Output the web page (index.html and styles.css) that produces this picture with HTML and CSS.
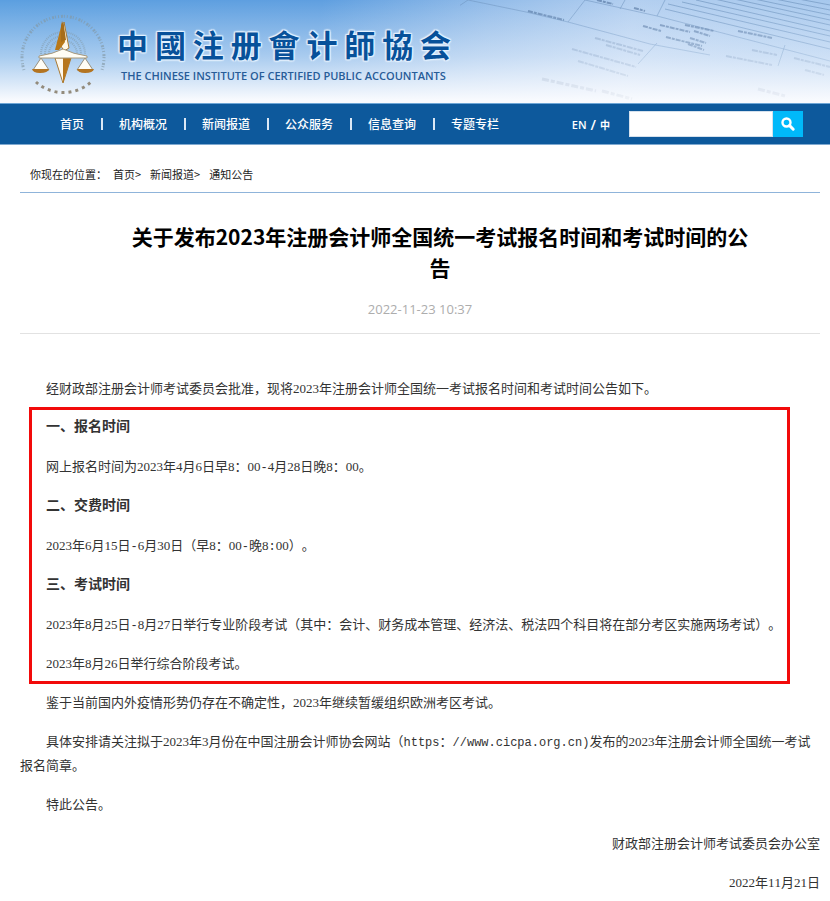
FILE: index.html
```html
<!DOCTYPE html>
<html lang="zh-CN">
<head>
<meta charset="utf-8">
<meta name="viewport" content="width=device-width, initial-scale=1">
<title>中国注册会计师协会</title>
<link rel="stylesheet" href="styles.css">
</head>
<body>
<header class="banner">
  <svg class="banner-art" viewBox="0 0 370 103" aria-hidden="true">
    <defs>
      <linearGradient id="fade" x1="0" y1="0" x2="0" y2="1">
        <stop offset="0" stop-color="#fff"/>
        <stop offset="1" stop-color="#fff" stop-opacity="0.1"/>
      </linearGradient>
      <mask id="fadeMask"><rect width="370" height="103" fill="url(#fade)"/></mask>
      <filter id="soft"><feGaussianBlur stdDeviation="0.7"/></filter>
    </defs>
    <g mask="url(#fadeMask)" fill="none" stroke="#6f93bd" filter="url(#soft)">
      <path stroke-width="1" opacity=".55" d="M8 0L66 12L108 22L190 44L250 55M125 0L108 22M165 0L160 9M205 0L197 16M125 0L197 16L370 61M197 43L178 64M325 45L318 66M8 0L-10 12"/>
      <path stroke-width="1" opacity=".65" d="M208 4L370 42M222 2L370 36M236 0L370 31M250 -2L370 25M265 -3L370 20M280 -4L370 15M295 -5L370 10M312 -6L370 5M205 9L370 49"/>
      <path stroke="#4b6c98" stroke-width="2" stroke-dasharray="5 1 3 1" opacity=".6" d="M68 11L104 20M137 0L153 4M174 8L185 11M183 26L201 31M200 25L230 32M225 25L254 31M206 37L242 46M234 31L250 36M230 38L246 43M228 44L244 50M278 31L312 38"/>
      <path stroke="#647fa6" stroke-width="2" stroke-dasharray="6 1 3 1" opacity=".4" d="M135 38L183 51M146 45L180 55M112 49L176 67M118 61L168 76M292 50L317 55M266 56L312 65M334 58L370 67M345 70L364 75"/>
      <path stroke="#5c6f8d" stroke-width="3" stroke-dasharray="7 2 4 2" opacity=".4" d="M82 79L136 91M142 91L172 99M298 89L325 96"/>
    </g>
  </svg>
  <a class="brand" href="#">
    <svg class="emblem" viewBox="0 0 90 90" aria-hidden="true">
      <g fill="none" stroke="#8298a4">
        <path stroke-width="3" stroke-dasharray="1 2 2 1 1 2" opacity=".65" d="M6 62A41 41 0 1 1 84 62"/>
        <path stroke-width="2" stroke-dasharray="1 1" opacity=".55" d="M23 46A22 22 0 0 1 67 46M27 46A18 18 0 0 1 63 46M31 46A14 14 0 0 1 59 46"/>
        <path stroke="#938b7c" stroke-width="3" stroke-dasharray="3 4" d="M18 74A41 41 0 0 0 73 74"/>
      </g>
      <path fill="#fff8e8" stroke="#a97932" stroke-width="1" d="M46 14L51 40L46 43L43 38Z"/>
      <path fill="#b97818" d="M44 15L47 34L41 42H37Z"/>
      <path fill="#a66d19" d="M43 18L44 13L46 18L48 32L43 34Z"/>
      <path fill="#fff9ed" stroke="#a97932" stroke-width="1" d="M37 50L45 75L53 50Z"/>
      <path fill="#b7761c" d="M45 50H53L45 75Z"/>
      <path fill="#fffdf5" stroke="#a6987d" stroke-width="1" d="M21 48Q35 46 45 41Q55 46 69 48V50H21Z"/>
      <path fill="#fffdf5" stroke="#98907d" stroke-width="1" d="M23 50L15 62H31ZM67 50L59 62H75Z"/>
      <path fill="#b37421" d="M14 61H31Q30 65 22 65Q15 65 14 61ZM59 61H76Q75 65 67 65Q60 65 59 61Z"/>
    </svg>
    <span class="brand-text">
      <span class="brand-cn"><span>中</span><span>國</span><span>注</span><span>册</span><span>會</span><span>计</span><span>師</span><span>協</span><span>会</span></span>
      <span class="brand-en">THE CHINESE INSTITUTE OF CERTIFIED PUBLIC ACCOUNTANTS</span>
    </span>
  </a>
</header>

<nav class="nav">
  <ul class="menu">
    <li><a href="#">首页</a></li>
    <li><a href="#">机构概况</a></li>
    <li><a href="#">新闻报道</a></li>
    <li><a href="#">公众服务</a></li>
    <li><a href="#">信息查询</a></li>
    <li><a href="#">专题专栏</a></li>
  </ul>
  <div class="lang"><a href="#">EN</a><span class="slash">/</span><a class="zh" href="#">中</a></div>
  <form class="search">
    <input type="text" aria-label="搜索">
    <button type="button" aria-label="搜索">
      <svg viewBox="0 0 16 16" width="16" height="16" aria-hidden="true"><circle cx="6.5" cy="6.5" r="4" fill="none" stroke="#fff" stroke-width="2.4"/><path d="M9.6 9.6L13.2 13.2" stroke="#fff" stroke-width="3" stroke-linecap="round"/></svg>
    </button>
  </form>
</nav>

<main class="page">
  <div class="crumbs"><span class="label">你现在的位置：</span><a href="#">首页&gt;</a><a href="#">新闻报道&gt;</a><a href="#">通知公告</a></div>
  <article>
    <div class="head">
      <h1>关于发布2023年注册会计师全国统一考试报名时间和考试时间的公告</h1>
      <time datetime="2022-11-23T10:37">2022-11-23 10:37</time>
    </div>
    <div class="content">
      <p>经财政部注册会计师考试委员会批准，现将2023年注册会计师全国统一考试报名时间和考试时间公告如下。</p>
      <section class="boxed">
        <h2>一、报名时间</h2>
        <p>网上报名时间为2023年4月6日早8：00<span class="mono">-</span>4月28日晚8：00。</p>
        <h2>二、交费时间</h2>
        <p>2023年6月15日<span class="mono">-</span>6月30日（早8：00<span class="mono">-</span>晚8<span class="mono">:</span>00）。</p>
        <h2>三、考试时间</h2>
        <p>2023年8月25日<span class="mono">-</span>8月27日举行专业阶段考试（其中：会计、财务成本管理、经济法、税法四个科目将在部分考区实施两场考试）。</p>
        <p>2023年8月26日举行综合阶段考试。</p>
      </section>
      <p>鉴于当前国内外疫情形势仍存在不确定性，2023年继续暂缓组织欧洲考区考试。</p>
      <p>具体安排请关注拟于2023年3月份在中国注册会计师协会网站（<span class="mono">https</span>：<span class="mono">//www.cicpa.org.cn)</span>发布的2023年注册会计师全国统一考试报名简章。</p>
      <p>特此公告。</p>
      <p class="sign">财政部注册会计师考试委员会办公室</p>
      <p class="sign">2022年11月21日</p>
    </div>
  </article>
</main>
</body>
</html>
```
FILE: styles.css
```css
* {
  box-sizing: border-box;
}

body {
  margin: 0;
  background: #fff;
  color: #333;
  font-family: "Noto Sans CJK SC", sans-serif;
}

a {
  color: inherit;
  text-decoration: none;
}

.banner {
  position: relative;
  overflow: hidden;
  height: 104px;
  border-bottom: 1px solid #6ea6d6;
  background:
    linear-gradient(to bottom, rgba(248, 251, 255, 0) 0%, rgba(244, 248, 254, 0.5) 55%, #f8fafe 97%),
    linear-gradient(100deg, #5b9fe0 0%, #5f9fe0 38%, #93bce9 58%, #b3cff0 75%, #a5c7ed 100%);
}

.banner-art {
  position: absolute;
  top: 0;
  right: 0;
  width: 370px;
  height: 103px;
}

.brand {
  position: relative;
  display: inline-flex;
  gap: 9px;
  padding: 8px 0 0 18px;
}

.emblem {
  width: 90px;
  height: 90px;
}

.brand-text {
  display: flex;
  flex-direction: column;
  padding-top: 14px;
}

.brand-cn {
  display: flex;
  justify-content: space-between;
  width: 334px;
  color: #07519a;
  font-family: "Noto Sans CJK TC", sans-serif;
  font-size: 31px;
  font-weight: 700;
  line-height: 44px;
  text-shadow: 1px 1px 1px #e4f1fe, -1px -1px 1px #e4f1fe, 1px -1px 1px #e4f1fe, -1px 1px 1px #e4f1fe, 0 0 3px #fff;
}

.brand-en {
  padding-left: 4px;
  color: #275c98;
  font-family: "Open Sans", sans-serif;
  font-size: 11px;
  font-weight: 600;
  line-height: 20px;
  white-space: nowrap;
}

.nav {
  display: flex;
  align-items: center;
  height: 41px;
  padding: 0 27px 0 60px;
  border-bottom: 1px solid #7fa9d0;
  background: #0d599c;
  color: #fff;
  font-size: 12px;
}

.menu {
  display: flex;
  margin: 0;
  padding: 0;
  list-style: none;
  font-weight: 500;
  line-height: 20px;
  white-space: nowrap;
}

.menu li {
  display: flex;
  align-items: center;
}

.menu li + li::before {
  content: "";
  width: 2px;
  height: 12px;
  margin: 0 16px 0 17px;
  background: #dbe8f5;
}

.lang {
  display: flex;
  align-items: center;
  gap: 4px;
  margin-left: auto;
  font-family: "Open Sans", "Noto Sans CJK SC", sans-serif;
  font-size: 11px;
  font-weight: 600;
}

.slash {
  font-size: 14px;
}

.zh {
  font-size: 10px;
}

.search {
  display: flex;
  margin: 0 0 0 19px;
}

.search input {
  width: 144px;
  height: 26px;
  padding: 0 6px;
  border: 1px solid #d5e1ed;
  border-radius: 0;
  background: #fff;
}

.search button {
  display: flex;
  align-items: center;
  justify-content: center;
  width: 30px;
  height: 26px;
  padding: 0;
  border: 0;
  background: #00b9fa;
}

.page {
  padding: 0 10px 0 20px;
}

.crumbs {
  display: flex;
  padding: 19px 10px 8px;
  border-bottom: 1px solid #8fb4da;
  color: #222;
  font-size: 11px;
  line-height: 20px;
}

.crumbs .label {
  margin-right: 6px;
}

.crumbs a {
  margin-right: 9px;
}

.head {
  padding: 28px 0 14px;
  border-bottom: 1px solid #e2e2e2;
  text-align: center;
}

h1 {
  margin: 0 70px 16px 110px;
  color: #000;
  font-size: 21px;
  font-weight: 700;
  line-height: 31px;
}

time {
  display: block;
  color: #adadad;
  font-family: "Open Sans", sans-serif;
  font-size: 13px;
  line-height: 20px;
}

.content {
  padding-top: 43px;
  font-family: "Liberation Serif", "Noto Sans CJK SC", serif;
  font-size: 13px;
  line-height: 24px;
  font-kerning: none;
  text-spacing-trim: space-all;
}

.content p {
  margin: 0 0 15px;
  text-indent: 26px;
}

.content .boxed {
  margin: -9px 30px 7px 9px;
  padding: 5px 0;
  border: 3px solid #f20a0a;
}

.boxed h2 {
  margin: 0 0 16px;
  padding-left: 14px;
  font-size: 14px;
  font-weight: 700;
  line-height: 24px;
}

.boxed p {
  text-indent: 14px;
}

.boxed p:last-child {
  margin-bottom: 0;
}

.mono {
  font-family: "Liberation Mono", monospace;
  font-size: 12px;
  line-height: 20px;
}

.content .sign {
  text-align: right;
}
```
